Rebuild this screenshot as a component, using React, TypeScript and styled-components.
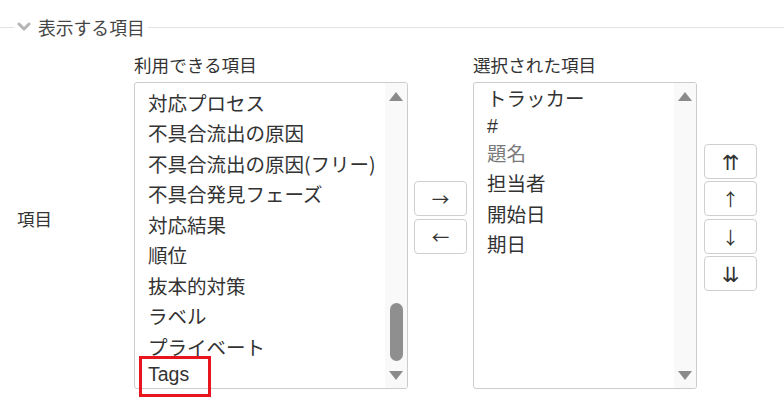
import React from "react";
import styled, { createGlobalStyle } from "styled-components";

const GlobalStyle = createGlobalStyle`
  html, body { margin: 0; padding: 0; background: #fff; }
  body {
    font-family: "Noto Sans CJK JP", "Liberation Sans", sans-serif;
    color: #333;
  }
  * { box-sizing: border-box; }
`;

const Page = styled.div`
  width: 784px;
  height: 400px;
  padding-top: 14px;
  overflow: hidden;
`;

const LegendRow = styled.div`
  display: flex;
  align-items: center;
  height: 26px;
`;

const Rule = styled.div<{ $grow?: boolean }>`
  height: 1px;
  background: #e2e2e2;
  width: ${(p) => (p.$grow ? "auto" : "14px")};
  flex: ${(p) => (p.$grow ? "1" : "none")};
`;

const Legend = styled.div`
  display: flex;
  align-items: center;
  gap: 7px;
  padding: 0 3px 0 3px;
  font-size: 17.8px;
  line-height: 26px;
  color: #444;
`;

const Chevron = styled.svg`
  width: 14px;
  height: 10px;
  display: block;
`;

const Body = styled.div`
  display: flex;
  align-items: center;
  margin-top: 12px;
`;

const FieldLabel = styled.div`
  width: 134px;
  padding-left: 17px;
  padding-bottom: 3px;
  font-size: 17.5px;
  line-height: 26px;
`;

const Column = styled.div<{ $width: number }>`
  width: ${(p) => p.$width}px;
  display: flex;
  flex-direction: column;
`;

const ColumnTitle = styled.div`
  font-size: 17.6px;
  line-height: 26px;
  height: 26px;
  margin-bottom: 4px;
`;

const ListBox = styled.div`
  position: relative;
  height: 307px;
  border: 1px solid #cccccc;
  border-radius: 3px;
  background: #fff;
  display: flex;
`;

const Options = styled.div<{ $offset: number }>`
  flex: 1;
  padding-top: ${(p) => p.$offset}px;
  display: flex;
  flex-direction: column;
`;

const Option = styled.div<{ $latin?: boolean; $muted?: boolean; $marked?: boolean }>`
  position: relative;
  height: ${(p) => (p.$latin ? "24px" : "30.5px")};
  line-height: ${(p) => (p.$latin ? "24px" : "30.5px")};
  padding-left: 13px;
  font-size: 19.5px;
  font-family: ${(p) =>
    p.$latin
      ? `"Liberation Sans", "Noto Sans CJK JP", sans-serif`
      : `"Noto Sans CJK JP", "Liberation Sans", sans-serif`};
  color: ${(p) => (p.$muted ? "#7a7a7a" : "#333")};
  white-space: nowrap;

  ${(p) =>
    p.$marked &&
    `
    &::after {
      content: "";
      position: absolute;
      left: 4px;
      top: -6px;
      width: 66px;
      height: 35px;
      border: 3px solid #e8141e;
      z-index: 2;
    }
  `}
`;

const Scrollbar = styled.div`
  width: 22px;
  background: #f9f9f9;
  display: flex;
  flex-direction: column;
  align-items: center;
  border-radius: 0 2px 2px 0;
`;

const ArrowCell = styled.div`
  height: 26px;
  display: flex;
  align-items: center;
  justify-content: center;
`;

const Triangle = styled.div<{ $down?: boolean }>`
  width: 0;
  height: 0;
  border-left: 7px solid transparent;
  border-right: 7px solid transparent;
  ${(p) =>
    p.$down
      ? "border-top: 9px solid #8a8a8a;"
      : "border-bottom: 9px solid #8a8a8a;"}
`;

const Track = styled.div`
  flex: 1;
  display: flex;
  flex-direction: column;
  justify-content: flex-end;
  padding-bottom: 1px;
`;

const Thumb = styled.div`
  width: 13px;
  height: 58px;
  border-radius: 7px;
  background: #8f8f8f;
`;

const ButtonStack = styled.div<{ $gap: number; $ml: number; $mr: number }>`
  display: flex;
  flex-direction: column;
  gap: ${(p) => p.$gap}px;
  margin-left: ${(p) => p.$ml}px;
  margin-right: ${(p) => p.$mr}px;
  padding-bottom: 6px;
`;

const MoveButton = styled.button<{ $double?: boolean }>`
  width: 53px;
  height: 35px;
  padding: 0;
  border: 1px solid #cfcfcf;
  border-radius: 4px;
  background: #fff;
  color: #333;
  font-family: "Noto Sans CJK JP", "DejaVu Sans", sans-serif;
  font-size: ${(p) => (p.$double ? "21px" : "17.5px")};
  line-height: 1;
  display: flex;
  align-items: center;
  justify-content: center;
  cursor: pointer;
`;

type Item = { label: string; latin?: boolean; muted?: boolean; marked?: boolean };

const available: Item[] = [
  { label: "対応プロセス" },
  { label: "不具合流出の原因" },
  { label: "不具合流出の原因(フリー)" },
  { label: "不具合発見フェーズ" },
  { label: "対応結果" },
  { label: "順位" },
  { label: "抜本的対策" },
  { label: "ラベル" },
  { label: "プライベート" },
  { label: "Tags", latin: true, marked: true },
];

const selected: Item[] = [
  { label: "トラッカー" },
  { label: "#", latin: true },
  { label: "題名", muted: true },
  { label: "担当者" },
  { label: "開始日" },
  { label: "期日" },
];

function SelectList({ items, offset, thumb }: { items: Item[]; offset: number; thumb: boolean }) {
  return (
    <ListBox>
      <Options $offset={offset}>
        {items.map((it) => (
          <Option key={it.label} $latin={it.latin} $muted={it.muted} $marked={it.marked}>
            {it.label}
          </Option>
        ))}
      </Options>
      <Scrollbar>
        <ArrowCell>
          <Triangle />
        </ArrowCell>
        <Track>{thumb && <Thumb />}</Track>
        <ArrowCell>
          <Triangle $down />
        </ArrowCell>
      </Scrollbar>
    </ListBox>
  );
}

export default function App() {
  return (
    <Page>
      <GlobalStyle />
      <LegendRow>
        <Rule />
        <Legend>
          <Chevron viewBox="0 0 14 10">
            <polyline
              points="2,2 7,7 12,2"
              fill="none"
              stroke="#b5b5b5"
              strokeWidth="3"
              strokeLinecap="round"
              strokeLinejoin="round"
            />
          </Chevron>
          表示する項目
        </Legend>
        <Rule $grow />
      </LegendRow>
      <Body>
        <FieldLabel>項目</FieldLabel>
        <Column $width={274}>
          <ColumnTitle>利用できる項目</ColumnTitle>
          <SelectList items={available} offset={4.75} thumb />
        </Column>
        <ButtonStack $gap={3} $ml={6} $mr={6}>
          <MoveButton>→</MoveButton>
          <MoveButton>←</MoveButton>
        </ButtonStack>
        <Column $width={224}>
          <ColumnTitle>選択された項目</ColumnTitle>
          <SelectList items={selected} offset={0} thumb={false} />
        </Column>
        <ButtonStack $gap={2.5} $ml={7} $mr={0}>
          <MoveButton $double>⇈</MoveButton>
          <MoveButton>↑</MoveButton>
          <MoveButton>↓</MoveButton>
          <MoveButton $double>⇊</MoveButton>
        </ButtonStack>
      </Body>
    </Page>
  );
}
